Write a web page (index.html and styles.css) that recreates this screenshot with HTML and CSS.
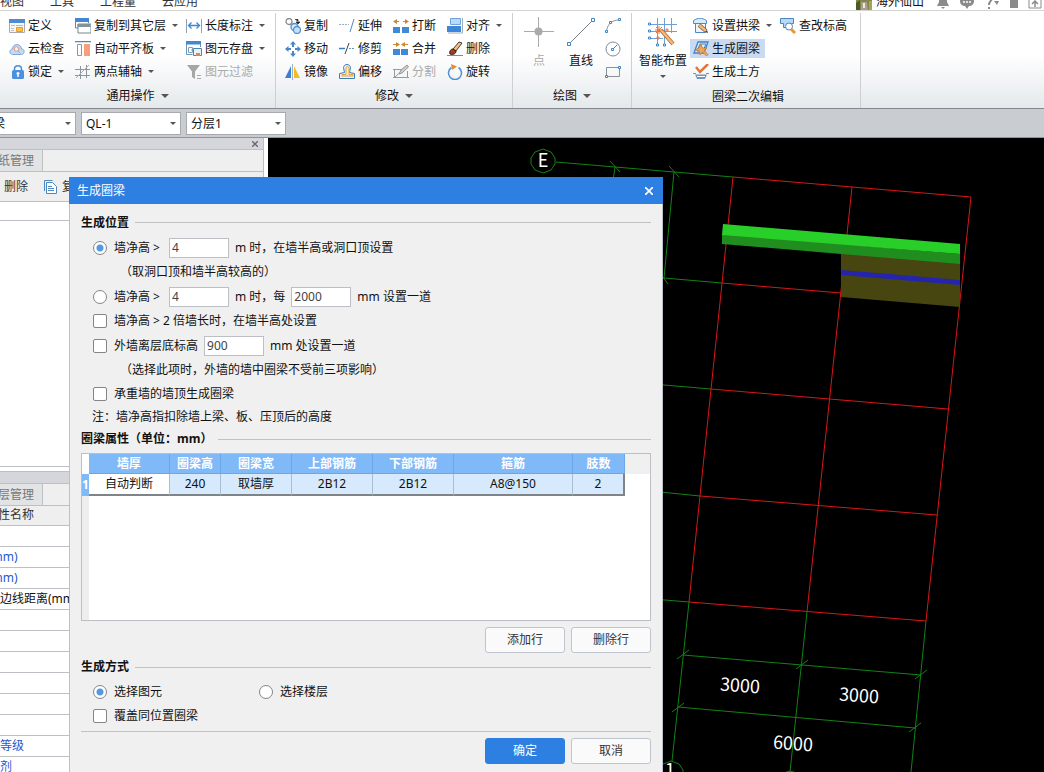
FILE: index.html
```
<!DOCTYPE html>
<html lang="zh-CN">
<head>
<meta charset="utf-8">
<title>生成圈梁</title>
<link rel="stylesheet" href="styles.css">
</head>
<body>
<header class="menubar">
  <nav class="menus">
    <a href="#">视图</a><a href="#">工具</a><a href="#">工程量</a><a href="#">云应用</a>
  </nav>
  <div class="account">
    <svg class="avatar" width="16" height="16" viewBox="0 0 16 16"><rect width="16" height="16" fill="#7d8a45"/><path d="M0 9l4-3v10H0z" fill="#4d5a28"/><path d="M5 8h6l1 8H5z" fill="#b09a94"/><path d="M7 9h2v5H7z" fill="#f1e8e4"/><path d="M13 7h3v9h-3z" fill="#a3a658"/></svg>
    <span class="user">海外仙山</span>
    <svg class="sys" width="14" height="16" viewBox="0 0 14 16"><path d="M7 1c3 0 4 3 4 7l2 4H1l2-4c0-4 1-7 4-7zM5 13h4l-2 2z" fill="#8b8b8b"/></svg>
    <svg class="sys" width="16" height="16" viewBox="0 0 16 16"><path d="M1 7c0-8 14-8 14 0 0 4-3 5-5 5l-2 3-2-3C4 12 1 11 1 7z" fill="#8b8b8b"/><path d="M4 8h2M7 8h2M10 8h2" stroke="#fff" stroke-width="1.5"/></svg>
    <svg class="sys" width="16" height="16" viewBox="0 0 16 16"><path d="M2 5c0-4 6-4 6-1S5 7 5 11M5 13v2" stroke="#8b8b8b" stroke-width="2" fill="none"/><path d="M10 7h5l-2 4z" fill="#8b8b8b"/></svg>
    <svg class="sys" width="10" height="16" viewBox="0 0 10 16"><path d="M1 2h8v12H1z" fill="#8b8b8b"/></svg>
    <svg class="sys" width="14" height="16" viewBox="0 0 14 16"><path d="M1 2h12v12H1z" fill="none" stroke="#8b8b8b"/><path d="M7 13V7M4 10l3-3 3 3" stroke="#8b8b8b" stroke-width="1.5" fill="none"/></svg>
  </div>
</header>

<section class="ribbon">
  <div class="group common">
    <div class="tools">
      <div class="col">
        <button class="tool" type="button"><svg width="16" height="16" viewBox="0 0 16 16"><path d="M.5 2v12.500h15V2" fill="#f7f7f7" stroke="#aaa"/><path d="M0 1h16v4H0z" fill="#4d8cd3"/><path d="M2 7.500h4M2 10.500h3M2 12.500h3M7 7.500h7" stroke="#bbb"/><path d="M7.500 9.500h6v4h-6z" fill="#ffc13f" stroke="#e0a02c"/></svg>定义</button>
        <button class="tool" type="button"><svg width="16" height="16" viewBox="0 0 16 16"><path d="M3.500 13.500C-.5 13 .5 8 3.500 8c0-6 8.500-6 9 0 3.500 0 3.500 5 0 5.500z" fill="#c3d9f5" stroke="#7ea5dd"/><circle cx="7.500" cy="8" r="2.300" fill="#eef4fb" stroke="#e39a72"/><path d="M9 10l2.500 2.500" stroke="#e39a72"/></svg>云检查</button>
        <button class="tool" type="button"><svg width="16" height="16" viewBox="0 0 16 16"><path d="M5.500 7V5c0-4.500 7-4.500 7 0v2" fill="none" stroke="#4c8ddb" stroke-width="1.500"/><rect x="3" y="6" width="12" height="9" rx="1.500" fill="#4c91e0"/><path d="M9 8v5M7.500 9.500h3" stroke="#fff" stroke-width="1.500"/></svg>锁定<i class="caret"></i></button>
      </div>
      <div class="col">
        <button class="tool" type="button"><svg width="16" height="16" viewBox="0 0 16 16"><path d="M.5 1v9H3M13.500 2v3" fill="none" stroke="#5089c8"/><path d="M0 0h14v4H0z" fill="#4686ce"/><path d="M3 6h13v9H3z" fill="#fff" stroke="#788"/><path d="M2.500 6h13v3h-13z" fill="#84929d"/></svg>复制到其它层<i class="caret"></i></button>
        <button class="tool" type="button"><svg width="16" height="16" viewBox="0 0 16 16"><path d="M0 .5h16" stroke="#4a89d0" stroke-width="1.500"/><path d="M2.500 3.500h4v11h-4z" fill="#fff" stroke="#8b98a2"/><path d="M9 3h6v12H9z" fill="#f6a07b"/></svg>自动平齐板<i class="caret"></i></button>
        <button class="tool" type="button"><svg width="16" height="16" viewBox="0 0 16 16"><path d="M0 5.500h15M0 11.500h15M5.500 2v13M11.500 1v13" stroke="#8f9498" fill="none"/><path d="M1 14L14 1" stroke="#df9b77"/></svg>两点辅轴<i class="caret"></i></button>
      </div>
      <div class="col">
        <button class="tool" type="button"><svg width="16" height="16" viewBox="0 0 16 16"><path d="M.5 1v14M15.500 1v14" stroke="#91a0b0"/><path d="M3 7.500h10M5.500 4.500l-3 3 3 3M10.500 4.500l3 3-3 3" stroke="#3d87d4" fill="none" stroke-width="1.300"/></svg>长度标注<i class="caret"></i></button>
        <button class="tool" type="button"><svg width="16" height="16" viewBox="0 0 16 16"><path d="M.5 3v10.500h6M14.500 3v3" fill="none" stroke="#6a94bd"/><path d="M0 0h15v3.500H0z" fill="#4587d1"/><path d="M2.500 6.500h4v5h-4zM5 9h3" fill="#fff" stroke="#7e9eb8"/><path d="M7.500 7.500h8v7h-8z" fill="#eaf3fb" stroke="#4d83b5"/><path d="M10 12h4v3h-4z" fill="#e8804f"/></svg>图元存盘<i class="caret"></i></button>
        <button class="tool" type="button" disabled><svg width="16" height="16" viewBox="0 0 16 16"><path d="M1 1h13L9 7.500V15l-3-2V7.500z" fill="#a6a6a6"/><path d="M11 11.500h4M11 14.500h4" stroke="#aaa"/></svg>图元过滤</button>
      </div>
    </div>
    <div class="caption">通用操作<i class="caret"></i></div>
  </div>

  <div class="group modify">
    <div class="tools">
      <div class="col">
        <button class="tool" type="button"><svg width="16" height="16" viewBox="0 0 16 16"><circle cx="4" cy="3.500" r="3" fill="#fff" stroke="#858b90" stroke-width="1.300"/><circle cx="9.500" cy="9" r="3.500" fill="#d9eafa" stroke="#4f93cf" stroke-width="1.300"/><circle cx="12" cy="12" r="3.500" fill="#c5e0f8" stroke="#4f93cf" stroke-width="1.300"/><path d="M10 1.500h3v2M11 4h4l-2 2z" fill="#222" stroke="#222" stroke-width=".7"/></svg>复制</button>
        <button class="tool" type="button"><svg width="16" height="16" viewBox="0 0 16 16"><path d="M8 0l3 3.500H5zM8 16l-3-3.500h6zM0 8l3.500-3v6zM16 8l-3.500 3V5z" fill="#4587ca"/><path d="M8 3v3M8 10v3M3 8h3M10 8h3" stroke="#4587ca" stroke-width="2"/></svg>移动</button>
        <button class="tool" type="button"><svg width="16" height="16" viewBox="0 0 16 16"><path d="M6 2v12H0z" fill="#3d7fd0"/><path d="M9 2l6 12H9z" fill="#f7ba27"/><path d="M7.500 0v16" stroke="#9bb3c9"/></svg>镜像</button>
      </div>
      <div class="col">
        <button class="tool" type="button"><svg width="16" height="16" viewBox="0 0 16 16"><path d="M0 6.500h10" stroke="#9aafc5" stroke-dasharray="2 1"/><path d="M15 1l-4 13" stroke="#4a89c4"/></svg>延伸</button>
        <button class="tool" type="button"><svg width="16" height="16" viewBox="0 0 16 16"><path d="M0 7.500h6" stroke="#3a7dc2" stroke-width="1.500"/><path d="M10 7.500h6" stroke="#6994be" stroke-dasharray="2 1"/><path d="M10 2L6 13" stroke="#36424e"/></svg>修剪</button>
        <button class="tool" type="button"><svg width="16" height="16" viewBox="0 0 16 16"><path d="M.5 14.500v-5l5-1-1-5C5-.5 11-.5 11.500 3.500l-1 5 5 1v5z" fill="#e8f2fb" stroke="#3d7bbb"/><path d="M3 12v-1.500h4V4c0-2 3-2 3 0v6.500h4V12z" fill="#ffefbd" stroke="#dba23f"/></svg>偏移</button>
      </div>
      <div class="col">
        <button class="tool" type="button"><svg width="16" height="16" viewBox="0 0 16 16"><path d="M0 9h7v6H0zM9 9h7v6H9z" fill="#4188d5"/><path d="M4 1L0 3.500 4 6zM12 1l4 2.500L12 6z" fill="#cf8630"/><path d="M3 3.500h3M10 3.500h3" stroke="#cf8630"/></svg>打断</button>
        <button class="tool" type="button"><svg width="16" height="16" viewBox="0 0 16 16"><path d="M0 8h7v6H0zM8 8h7v6H8z" fill="#4188d5"/><path d="M3 1l4 2.500L3 6zM12 1L8 3.500 12 6z" fill="#cf8630"/><path d="M0 3.500h4M11 3.500h4" stroke="#cf8630"/></svg>合并</button>
        <button class="tool" type="button" disabled><svg width="16" height="16" viewBox="0 0 16 16"><path d="M1.500 5v9M14.500 7v7M0 5.500h8M0 13.500h16M2 13l11-10" stroke="#999" fill="none"/><path d="M6 10l2-4 6-5 1.500 2L9 9z" fill="#ccc" stroke="#999"/></svg>分割</button>
      </div>
      <div class="col">
        <button class="tool" type="button"><svg width="16" height="16" viewBox="0 0 16 16"><path d="M3.500.5h10v6h-10z" fill="#b8dafa" stroke="#6fa5da"/><path d="M0 8h14v6H0z" fill="#3d86da"/><path d="M15.500 0v15H1" stroke="#9cadbd" fill="none"/></svg>对齐<i class="caret"></i></button>
        <button class="tool" type="button"><svg width="16" height="16" viewBox="0 0 16 16"><path d="M0 14.500h16" stroke="#888"/><path d="M6 8l6-7 3 1-6 8z" fill="#efc18a" stroke="#4b392d"/><path d="M3 13c-1-3 1-5 3-5l3 2c0 3-3 4-6 3z" fill="#a63d22" stroke="#332019"/></svg>删除</button>
        <button class="tool" type="button"><svg width="16" height="16" viewBox="0 0 16 16"><path d="M4.500 3.500a6.500 6.500 0 1 0 7 0" fill="none" stroke="#4f91d5" stroke-width="1.500"/><path d="M4 0l6 2.500L5 6z" fill="#e58a38"/></svg>旋转</button>
      </div>
    </div>
    <div class="caption">修改<i class="caret"></i></div>
  </div>

  <div class="group draw">
    <div class="tools">
      <button class="big" type="button" disabled><svg width="30" height="30" viewBox="0 0 30 30"><path d="M14.500 0v30M0 14.500h30" stroke="#aaa"/><circle cx="14.500" cy="14.500" r="4" fill="#aaa"/></svg>点</button>
      <button class="big" type="button"><svg width="30" height="30" viewBox="0 0 30 30"><path d="M3 27L27 3" stroke="#7a828c"/><path d="M1.500 25.500h3v3h-3zM25.500 1.500h3v3h-3z" fill="#fff" stroke="#3d85c9"/></svg>直线</button>
      <div class="col">
        <button class="tool" type="button" aria-label="圆弧"><svg width="16" height="16" viewBox="0 0 16 16"><path d="M1.500 14C2 7 6 2 14 2" fill="none" stroke="#8a929b"/><path d="M.5 12.500h2v2h-2zM13.500.5h2v2h-2zM4.500 3.500h2v2h-2z" fill="#fff" stroke="#3d85c9"/></svg></button>
        <button class="tool" type="button" aria-label="圆"><svg width="16" height="16" viewBox="0 0 16 16"><circle cx="8" cy="8" r="7" fill="none" stroke="#7b8d9e"/><path d="M8 8l4-4" stroke="#3d85c9"/><path d="M6.500 7.500h2v2h-2z" fill="#fff" stroke="#3d85c9"/></svg></button>
        <button class="tool" type="button" aria-label="矩形"><svg width="16" height="16" viewBox="0 0 16 16"><path d="M1.500 3.500h13v9h-13z" fill="none" stroke="#8c9299"/><path d="M.5 11.500h2v2h-2zM13.500 2.500h2v2h-2z" fill="#fff" stroke="#3d85c9"/></svg></button>
      </div>
    </div>
    <div class="caption">绘图<i class="caret"></i></div>
  </div>

  <div class="group ringbeam">
    <div class="tools">
      <button class="big" type="button"><svg width="30" height="30" viewBox="0 0 30 30"><path d="M9.500 1v26M16.500 1v26M23.500 1v15M3 7.500h26M3 14.500h26M3 21.500h12" stroke="#6da0d5" fill="none"/><path d="M.5 6h2v2h-2zM.5 13h2v2h-2zM.5 20h2v2h-2zM8.500 27h2v2h-2zM15.500 27h2v2h-2z" fill="#fff" stroke="#3d85c9"/><path d="M13 13l12 14" stroke="#ad6538" stroke-width="4"/><path d="M13 13l12 14" stroke="#f4bd72" stroke-width="2.500"/><path d="M11 9v8M7 13h8M8 10l6 6M14 10l-6 6M19 11v4M17 13h4M10 19v4M8 21h4" stroke="#e8763b"/></svg>智能布置<i class="caret"></i></button>
      <div class="col">
        <button class="tool" type="button"><svg width="16" height="16" viewBox="0 0 16 16"><path d="M.5 5.500V2.500c5-3 8-3 13 0v3z" fill="#d9ebfb" stroke="#4b8bc8"/><path d="M2.500 6v8.500h10V6" fill="#edf5fc" stroke="#4b8bc8"/><path d="M6 7l7 6" stroke="#82563a" stroke-width="4"/><path d="M6 7l7 6" stroke="#f4ba78" stroke-width="2.500"/><path d="M12 14l3 1-1-3z" fill="#444"/></svg>设置拱梁<i class="caret"></i></button>
        <button class="tool active" type="button"><svg width="16" height="16" viewBox="0 0 16 16"><path d="M1 12L5 1h10l-4 11z" fill="#e2effc" stroke="#4081c2" stroke-width="1.300"/><path d="M4 10l3-7h6l-3 7z" fill="none" stroke="#4081c2"/><path d="M8 3l1.500 4H14l-3 2.500 4 4-1.500 1.500-4-4L7 14l-1-4-4-1 4-2z" fill="#eda557" stroke="#be7130" stroke-width=".7"/></svg>生成圈梁</button>
        <button class="tool" type="button"><svg width="16" height="16" viewBox="0 0 16 16"><path d="M3 3l4 5 8-8" stroke="#e1753a" stroke-width="2.500" fill="none"/><path d="M0 9.500h3M13 9.500h3" stroke="#7397bd"/><path d="M2 10.500h12l-2 4.500H4z" fill="#7196bb"/><path d="M4 12.500h8" stroke="#fff"/></svg>生成土方</button>
      </div>
      <div class="col">
        <button class="tool" type="button"><svg width="16" height="16" viewBox="0 0 16 16"><path d="M.5.500h13v5h-2v4h-8v-4h-3z" fill="#b9d7f7" stroke="#4a86c3"/><circle cx="9" cy="8.500" r="3.500" fill="#fff" stroke="#4a86c3"/><path d="M11 11l4 4" stroke="#e99835" stroke-width="3"/></svg>查改标高</button>
      </div>
    </div>
    <div class="caption">圈梁二次编辑</div>
  </div>
</section>

<div class="quickbar">
  <label class="combo"><select aria-label="构件类型"><option>圈梁</option></select></label>
  <label class="combo"><select aria-label="构件"><option>QL-1</option></select></label>
  <label class="combo"><select aria-label="分层"><option>分层1</option></select></label>
</div>

<main class="workspace">
  <aside class="dock">
    <div class="pane drawings">
      <div class="panehead"><button class="paneclose" type="button" aria-label="关闭"><svg width="6" height="6" viewBox="0 0 6 6"><path d="M0 0l6 6M6 0L0 6" stroke="#666" stroke-width="1.300"/></svg></button></div>
      <div class="tabs"><button class="tab" type="button">图纸管理</button></div>
      <div class="panetools">
        <button class="tool" type="button">删除</button>
        <button class="tool" type="button"><svg width="13" height="14" viewBox="0 0 13 14"><path d="M.5 11V.5h8" fill="none" stroke="#4d87c0"/><path d="M2.500 2.500h6l4 4v7h-10z" fill="#fff" stroke="#4d87c0"/><path d="M4 6.500h4M4 8.500h6M4 10.500h6" stroke="#4d87c0"/></svg>复制</button>
      </div>
      <div class="panerow"></div>
      <div class="panebody"></div>
    </div>
    <div class="pane props">
      <div class="panehead"></div>
      <div class="tabs"><button class="tab" type="button">楼层管理</button></div>
      <table class="proptable">
        <thead><tr><th></th><th>属性名称</th></tr></thead>
        <tbody>
          <tr><td></td><td>名称</td></tr>
          <tr><td></td><td class="key">截面宽度(mm)</td></tr>
          <tr><td></td><td class="key">截面高度(mm)</td></tr>
          <tr><td></td><td>轴线距梁左边线距离(mm)</td></tr>
          <tr><td></td><td></td></tr>
          <tr><td></td><td></td></tr>
          <tr><td></td><td></td></tr>
          <tr><td></td><td></td></tr>
          <tr><td></td><td></td></tr>
          <tr><td></td><td></td></tr>
          <tr><td></td><td class="key">混凝土强度等级</td></tr>
          <tr><td></td><td class="key">混凝土外加剂</td></tr>
        </tbody>
      </table>
    </div>
  </aside>

  <div class="viewport">
    <svg class="model" viewBox="268 138 776 634" preserveAspectRatio="xMinYMin meet">
      <g fill="none" stroke="#138213">
        <path d="M543 149l8 3 4 6v6l-4 6-8 3-8-3-4-6v-6l4-6z"/>
        <path d="M556 162l177 15M610 161l10 11M669 166l10 11M615 167l-2 14M674 172l-10 106 58 5M662 276l6 8"/>
        <path d="M640 383l71 6M640 490l60 6M640 598l49 4"/>
        <path d="M689 602l-17 159M807 612l-17 160M926 621l-15 151"/>
        <path d="M683 655l238 20M677 659l12-9M796 669l12-9M915 679l12-9"/>
        <path d="M678 707l237 21M672 712l12-9M909 732l12-9"/>
        <path d="M671 761l8 3 4 6v6M671 761l-8 3M783 773l7-2 7 2"/>
      </g>
      <g fill="none" stroke="#d91616">
        <path d="M733 177l238 20-45 424-237-19zM852 187l-45 425M722 283l238 20M711 389l237 20M700 496l237 19"/>
      </g>
      <path d="M841 253l119 10v44l-119-10z" fill="#484610"/>
      <path d="M841 270l119 10v5l-119-10z" fill="#2424ac"/>
      <path d="M722 234l238 20v10l-238-20z" fill="#1f8e1f"/>
      <path d="M723 224l237 20v10l-238-19z" fill="#29cf29"/>
      <g class="dims">
        <text x="543" y="167">E</text>
        <text x="740" y="692" transform="rotate(4 740 686)">3000</text>
        <text x="859" y="702" transform="rotate(4 859 696)">3000</text>
        <text x="793" y="750" transform="rotate(4 793 744)">6000</text>
        <text x="670" y="777">1</text>
      </g>
    </svg>
  </div>
</main>

<form class="dialog" role="dialog" aria-labelledby="dlg-title">
  <div class="titlebar"><h1 id="dlg-title">生成圈梁</h1><button class="close" type="button" aria-label="关闭"><svg width="8" height="8" viewBox="0 0 8 8"><path d="M0 0l8 8M8 0L0 8" stroke="#fff" stroke-width="1.700"/></svg></button></div>
  <div class="content">
    <h2>生成位置</h2>
    <div class="opt field"><label class="limit"><input type="radio" name="pos" checked>墙净高 &gt;</label><input type="text" value="4" aria-label="墙净高（m）"><span>m 时，在墙半高或洞口顶设置</span></div>
    <p class="note">（取洞口顶和墙半高较高的）</p>
    <div class="opt field"><label class="limit"><input type="radio" name="pos">墙净高 &gt;</label><input type="text" value="4" aria-label="墙净高（m）"><span>m 时，每</span><input type="text" value="2000" aria-label="间距（mm）"><span>mm 设置一道</span></div>
    <div class="opt"><label><input type="checkbox">墙净高 &gt; 2 倍墙长时，在墙半高处设置</label></div>
    <div class="opt field"><label><input type="checkbox">外墙离层底标高</label><input type="text" value="900" aria-label="标高（mm）"><span>mm 处设置一道</span></div>
    <p class="note">（选择此项时，外墙的墙中圈梁不受前三项影响）</p>
    <div class="opt tight"><label><input type="checkbox">承重墙的墙顶生成圈梁</label></div>
    <p class="remark">注：墙净高指扣除墙上梁、板、压顶后的高度</p>
    <h2 class="low">圈梁属性（单位：mm）</h2>
    <div class="grid">
      <table>
        <colgroup><col class="w-no"><col class="w-thick"><col class="w-high"><col class="w-wide"><col class="w-bar"><col class="w-bar"><col class="w-hoop"><col class="w-legs"><col></colgroup>
        <thead><tr><th></th><th>墙厚</th><th>圈梁高</th><th>圈梁宽</th><th>上部钢筋</th><th>下部钢筋</th><th>箍筋</th><th>肢数</th><th></th></tr></thead>
        <tbody><tr><th>1</th><td>自动判断</td><td>240</td><td>取墙厚</td><td>2B12</td><td>2B12</td><td>A8@150</td><td>2</td><td></td></tr></tbody>
      </table>
    </div>
    <div class="actions"><button type="button">添加行</button><button type="button">删除行</button></div>
    <h2 class="mode">生成方式</h2>
    <div class="opt modes"><label><input type="radio" name="mode" checked>选择图元</label><label><input type="radio" name="mode">选择楼层</label></div>
    <div class="opt"><label><input type="checkbox">覆盖同位置圈梁</label></div>
    <div class="actions footer"><button class="primary" type="submit">确定</button><button type="button">取消</button></div>
  </div>
</form>
</body>
</html>
```
FILE: styles.css
```
* { box-sizing: border-box; }
body {
  margin: 0;
  height: 100vh;
  overflow: hidden;
  display: flex;
  flex-direction: column;
  position: relative;
  background: #fff;
  color: #111;
  font: 12px/16px "Noto Sans", "Noto Sans CJK SC", sans-serif;
}
button, input, select { font: inherit; color: inherit; }
button { border: 0; padding: 0; background: none; }
h1, h2, p { margin: 0; }
svg { display: block; flex: none; }

/* menu strip */
.menubar {
  flex: none;
  height: 11px;
  overflow: hidden;
  display: flex;
  justify-content: space-between;
  align-items: flex-end;
  border-bottom: 1px solid #d4d4d4;
}
.menus { display: flex; gap: 26px; }
.menus a { color: #333; text-decoration: none; }
.account { display: flex; align-items: flex-end; padding-right: 2px; }
.user { margin: 0 12px 0 4px; }
.sys { margin-right: 9px; }
.sys:last-child { margin-right: 0; }

/* ribbon */
.ribbon {
  flex: none;
  display: flex;
  padding-top: 2px;
  background: linear-gradient(#fff 45%, #e5e9eb);
  border-bottom: 1px solid #85898e;
}
.group { padding: 1px 0; border-right: 1px solid #cdd0d3; }
.tools { display: grid; height: 69px; align-items: start; }
.common { width: 276px; }
.common .tools { grid-template-columns: 66px 111px 1fr; padding-left: 9px; }
.modify { width: 237px; }
.modify .tools { grid-template-columns: 54px 54px 54px 1fr; padding-left: 9px; }
.draw { width: 119px; }
.draw .tools { grid-template-columns: 42px 42px 1fr; padding-left: 5px; }
.draw .col { padding-left: 3px; }
.ringbeam { width: 229px; }
.ringbeam .tools { grid-template-columns: 58px 87px 1fr; padding-left: 2px; }
.col { display: flex; flex-direction: column; align-items: flex-start; }
.tool { display: flex; align-items: center; gap: 3px; height: 23px; white-space: nowrap; }
.ringbeam .tool { height: 19px; margin: 2px 0 2px -2px; padding: 0 5px 0 3px; }
.tool:disabled, .big:disabled { color: #aaa; }
.tool.active { background: #c9dbf3; }
.big {
  display: flex;
  flex-direction: column;
  align-items: center;
  gap: 6px;
  padding-top: 3px;
  white-space: nowrap;
}
.caret { border: 4px solid transparent; border-top-color: #555; border-bottom: 0; }
.tool .caret { border-width: 3px 3px 0; margin-left: 3px; }
.big .caret { border-width: 3px 3px 0; }
.caption { display: flex; align-items: center; justify-content: center; gap: 6px; height: 24px; padding-top: 2px; }
.ringbeam .caption { padding: 4px 0 0 4px; }

/* selectors under the ribbon */
.quickbar {
  flex: none;
  display: flex;
  gap: 5px;
  height: 29px;
  padding: 3px 0 2px;
  margin-left: -24px;
  background: #c9ccd1;
  border-bottom: 1px solid #8f9499;
}
.combo { position: relative; width: 100px; height: 23px; }
.combo select {
  appearance: none;
  width: 100%;
  height: 100%;
  padding: 0 4px;
  border: 1px solid #a7abb0;
  border-radius: 0;
  background: #fff;
}
.combo::after {
  content: "";
  position: absolute;
  right: 5px;
  top: 10px;
  border: 3px solid transparent;
  border-top-color: #555;
  border-bottom: 0;
}

/* workspace */
.workspace { flex: 1; min-height: 0; display: flex; }
.dock { flex: none; width: 348px; margin-left: -84px; margin-right: 4px; display: flex; flex-direction: column; border-right: 1px solid #bcbfc4; }
.pane { flex: none; }
.panehead { display: flex; align-items: center; justify-content: flex-end; height: 12px; padding-right: 5px; background: #d4d6db; border-bottom: 1px solid #bcbfc4; }
.tabs { display: flex; height: 22px; background: #efefef; border-bottom: 1px solid #bcbfc4; }
.tab { width: 127px; padding: 0 8px; text-align: right; color: #777; background: #e2e3e4; border-right: 1px solid #bcbfc4; }
.panetools { display: flex; gap: 16px; align-items: center; height: 30px; padding-left: 88px; background: #efefef; border-bottom: 1px solid #bcbfc4; color: #333; }
.panetools .tool { gap: 5px; }
.panerow { height: 19px; border-bottom: 1px solid #bcbfc4; }
.panebody { height: 246px; border-bottom: 1px solid #bcbfc4; }
.props { margin-top: 4px; border-top: 1px solid #bcbfc4; }
.proptable { width: 100%; border-collapse: collapse; table-layout: fixed; }
.proptable th, .proptable td { height: 21px; padding: 0; border-bottom: 1px solid #bcbfc4; font-weight: 400; text-align: left; white-space: nowrap; }
.proptable th { height: 19px; background: #efefef; color: #333; padding-left: 46px; }
.proptable th:first-child { width: 24px; padding: 0; }
.proptable .key { color: #2457cf; }
.viewport { flex: 1; min-width: 0; background: #000; overflow: hidden; }
.model { width: 100%; height: 100%; }
.dims { fill: #fff; font: 18px "Noto Sans CJK SC", sans-serif; text-anchor: middle; }

/* floating dialog */
.dialog { position: absolute; left: 69px; top: 177px; width: 594px; background: #f0f0f0; border: solid #bcc0c8; border-width: 0 1px; }
.titlebar { display: flex; align-items: center; justify-content: space-between; height: 27px; margin: 0 -1px; padding: 0 10px 0 8px; background: #2d80e2; color: #fff; }
.titlebar h1 { font-size: 12px; font-weight: 400; }
.content { padding: 5px 11px 8px; }
h2 { display: flex; align-items: center; gap: 6px; height: 26px; padding-top: 1px; font-size: 12px; line-height: 16px; }
h2::after { content: ""; flex: 1; border-top: 1px solid #bfc1c4; }
h2.low { height: 21px; }
h2.mode { height: 27px; }
.opt { display: flex; align-items: center; gap: 6px; height: 24px; padding-left: 12px; white-space: nowrap; }
.opt.field { height: 25px; }
.opt.tight { height: 23px; }
.opt label { display: flex; align-items: center; gap: 7px; }
.opt .limit { width: 70px; }
.modes label { width: 160px; }
.note { height: 24px; line-height: 24px; padding-left: 39px; }
.remark { height: 23px; line-height: 23px; padding-left: 11px; }
input[type="radio"], input[type="checkbox"] {
  appearance: none;
  flex: none;
  width: 14px;
  height: 14px;
  margin: 0;
  border: 1px solid #858585;
  border-radius: 2px;
  background: #fff;
}
input[type="radio"] { border-radius: 50%; }
input[type="radio"]:checked { background: radial-gradient(circle, #5199e6 3px, #fff 4px); }
input[type="text"] { width: 60px; height: 20px; padding: 0 2px; border: 1px solid #bcc0c5; border-radius: 0; background: #fff; color: #444; }
.grid {
  height: 168px;
  margin-top: 4px;
  border: 1px solid #bcc0c5;
  background: linear-gradient(90deg, #eee 7px, #fff 7px);
}
.grid table { width: 100%; border-collapse: separate; border-spacing: 0; table-layout: fixed; }
.w-no { width: 7px; }
.w-thick { width: 81px; }
.w-high { width: 51px; }
.w-wide { width: 71px; }
.w-bar { width: 81px; }
.w-hoop { width: 119px; }
.w-legs { width: 52px; }
.grid th, .grid td { height: 20px; padding: 0; text-align: center; white-space: nowrap; }
.grid thead th { background: #80b9f8; color: #fff; border-right: 1px solid #6ca6e5; border-bottom: 1px solid #6ca6e5; }
.grid thead th:first-child { background: #fff; border: 0; }
.grid thead th:last-child { background: #f0f0f0; border: 0; }
.grid tbody th { background: #80b9f8; color: #fff; }
.grid td { height: 22px; background: #d6e9fd; border-right: 1px solid #a9bed4; border-bottom: 2px solid #7f8488; }
.grid td:nth-child(2) { background: #fff; }
.grid td:nth-child(8) { border-right: 2px solid #7f8488; }
.grid td:last-child { background: #fff; border: 0; }
.actions { display: flex; justify-content: flex-end; gap: 6px; padding-top: 6px; }
.actions button { width: 80px; height: 26px; border: 1px solid #c0c4cf; border-radius: 3px; background: #fafafa; color: #333; }
.actions .primary { background: #2d80e2; border-color: #2d80e2; color: #fff; }
.footer { margin-top: 3px; border-top: 1px solid #bfc1c4; }
```
